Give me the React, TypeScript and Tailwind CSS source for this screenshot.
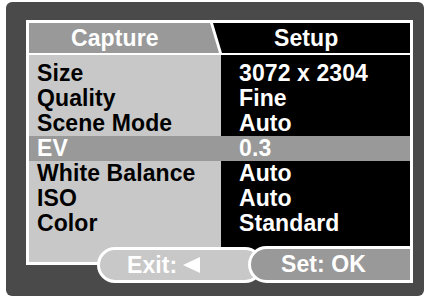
import React from "react";

const rows = [
  { label: "Size", value: "3072 x 2304" },
  { label: "Quality", value: "Fine" },
  { label: "Scene Mode", value: "Auto" },
  { label: "EV", value: "0.3", active: true },
  { label: "White Balance", value: "Auto" },
  { label: "ISO", value: "Auto" },
  { label: "Color", value: "Standard" },
];

export default function App() {
  return (
    <div className="w-[429px] h-[298px] bg-white pt-[2px] pl-[6px] font-['Liberation_Sans',Arial,sans-serif] font-bold text-[23px] tracking-[0.1px]">
      <div className="w-[418px] h-[294px] rounded-[6px] bg-[#4a4a4a] pt-[18px] pl-[20px]">
        {/* frame */}
        <div className="relative w-[387px] border-[3px] border-white bg-white">
          {/* tabs */}
          <div className="grid h-[29px] bg-white">
            <div className="[grid-area:1/1] bg-[#999999] text-white leading-[29px] pl-[42px] pt-[1px] [clip-path:polygon(0_0,181px_0,190px_100%,0_100%)]">
              Capture
            </div>
            <div className="[grid-area:1/1] bg-black text-white leading-[29px] pl-[245px] pt-[1px] [clip-path:polygon(184px_0,100%_0,100%_100%,193px_100%)]">
              Setup
            </div>
          </div>
          <div className="h-[3px] bg-white" />
          {/* list */}
          <div className="grid grid-cols-[192px_1fr] h-[207px]">
            <div className="bg-[#c8c8c8] pt-[6px] text-black">
              {rows.map((r) => (
                <div
                  key={r.label}
                  className={`h-[25px] leading-[25px] pl-[8px] ${r.active ? "bg-[#999999] text-white" : ""}`}
                >
                  {r.label}
                </div>
              ))}
            </div>
            <div className="bg-black pt-[6px] text-white">
              {rows.map((r) => (
                <div
                  key={r.label}
                  className={`h-[25px] leading-[25px] pl-[18px] ${r.active ? "bg-[#999999]" : ""}`}
                >
                  {r.value}
                </div>
              ))}
            </div>
          </div>

          {/* bottom buttons */}
          <div className="absolute left-[68px] top-[224px] w-[166px] h-[36px] rounded-full border-[3px] border-white bg-[#c8c8c8] text-white flex items-center pl-[27px]">
            <span>Exit:</span>
            <svg width="17" height="16" viewBox="0 0 17 16" className="ml-[6px]">
              <polygon points="17,0 17,16 0,8" fill="white" />
            </svg>
          </div>
          <div className="absolute left-[219px] right-[-3px] top-[223px] h-[37px] rounded-l-full border-[3px] border-white bg-[#999999] text-white flex items-center pl-[30px]">
            Set: OK
          </div>
        </div>
      </div>
    </div>
  );
}
